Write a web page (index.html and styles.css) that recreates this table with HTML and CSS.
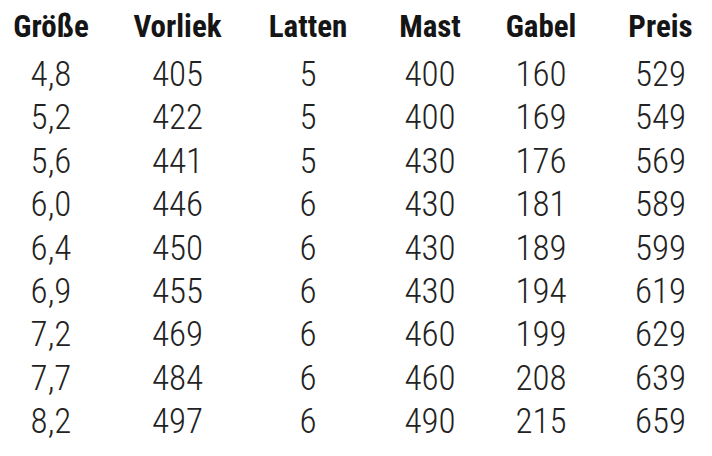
FILE: index.html
```html
<!DOCTYPE html>
<html lang="de">
<head>
<meta charset="utf-8">
<title>Größentabelle</title>
<link rel="stylesheet" href="styles.css">
</head>
<body>
<table class="sizes">
  <colgroup>
    <col class="c1"><col class="c2"><col class="c3"><col class="c4"><col class="c5"><col class="c6">
  </colgroup>
  <thead>
    <tr><th>Größe</th><th>Vorliek</th><th>Latten</th><th>Mast</th><th>Gabel</th><th>Preis</th></tr>
  </thead>
  <tbody>
    <tr><td>4,8</td><td>405</td><td>5</td><td>400</td><td>160</td><td>529</td></tr>
    <tr><td>5,2</td><td>422</td><td>5</td><td>400</td><td>169</td><td>549</td></tr>
    <tr><td>5,6</td><td>441</td><td>5</td><td>430</td><td>176</td><td>569</td></tr>
    <tr><td>6,0</td><td>446</td><td>6</td><td>430</td><td>181</td><td>589</td></tr>
    <tr><td>6,4</td><td>450</td><td>6</td><td>430</td><td>189</td><td>599</td></tr>
    <tr><td>6,9</td><td>455</td><td>6</td><td>430</td><td>194</td><td>619</td></tr>
    <tr><td>7,2</td><td>469</td><td>6</td><td>460</td><td>199</td><td>629</td></tr>
    <tr><td>7,7</td><td>484</td><td>6</td><td>460</td><td>208</td><td>639</td></tr>
    <tr><td>8,2</td><td>497</td><td>6</td><td>490</td><td>215</td><td>659</td></tr>
  </tbody>
</table>
</body>
</html>
```
FILE: styles.css
```css
html, body {
  margin: 0;
  padding: 0;
  background: #ffffff;
  overflow: hidden;
}
.sizes {
  border-collapse: collapse;
  border-spacing: 0;
  table-layout: fixed;
  width: 736px;
  font-family: "Roboto Condensed", "Roboto", "DejaVu Sans Condensed", sans-serif;
  color: #1b1b1b;
}
.c1 { width: 102px; }
.c2 { width: 151px; }
.c3 { width: 110px; }
.c4 { width: 134px; }
.c5 { width: 88px; }
.c6 { width: 151px; }
.sizes th,
.sizes td {
  padding: 0;
  text-align: center;
  white-space: nowrap;
}
.sizes th {
  font-size: 31px;
  font-weight: 700;
  height: 53px;
  line-height: 53px;
  color: #151515;
}
.sizes td {
  font-size: 35px;
  font-weight: 300;
  height: 43.4px;
  line-height: 43.4px;
  color: #222222;
}
```
